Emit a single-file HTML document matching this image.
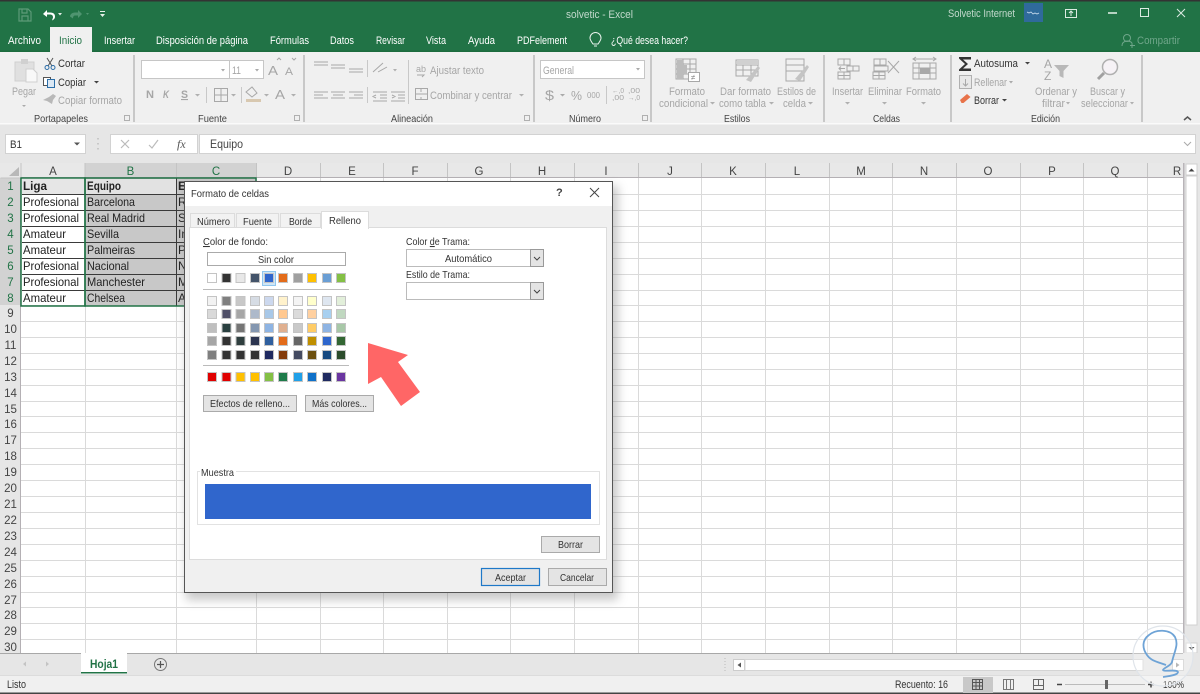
<!DOCTYPE html>
<html lang="es"><head><meta charset="utf-8"><title>solvetic - Excel</title>
<style>
html,body{margin:0;padding:0;background:#fff;width:1200px;height:694px;overflow:hidden}
svg{display:block;filter:blur(.35px)}
text{font-family:"Liberation Sans",sans-serif;font-size:11px;fill:#333}
.u{text-decoration:underline}
.g text{fill:#a6a6a6}
.t text{fill:#fff}
.l text{fill:#444;font-size:10.5px}
.c text{font-size:12px;fill:#222}
.h text{font-size:11.5px;fill:#444;text-anchor:middle}
.hg text{font-size:11.5px;fill:#217346;text-anchor:middle}
.s rect{stroke:#c4c4c4;stroke-width:1}
.i{fill:none;stroke:#a8a8a8;stroke-width:1}
.d{fill:none;stroke:#444;stroke-width:1}
</style></head><body>
<svg width="1200" height="694" viewBox="0 0 1200 694" xmlns="http://www.w3.org/2000/svg">
<defs><filter id="b" x="-10%" y="-10%" width="120%" height="120%"><feGaussianBlur stdDeviation="5"/></filter></defs>
<rect width="1200" height="694" fill="#fff"/>
<!-- title -->
<rect width="1200" height="52" fill="#217346"/>
<rect width="1200" height="1.5" fill="#333"/>
<rect y="50.5" width="1200" height="1.5" fill="#1c6b3e"/>
<rect x="50" y="27" width="42" height="25" fill="#f0f0f0"/>
<g fill="none" stroke="#5d9a78" stroke-width="1.2"><path d="M19 9h9l3 3v9H19zM22 9v4h5V9M22 21v-5h6v5"/></g>
<path d="M43 14l4-4v2.500h3c4 0 5 2 5 4s-1 3-3 4l1-3c0-2-1-3-3-3h-3v2.500z" fill="#fff"/>
<path d="M58 13h4l-2 2.500z" fill="#e0ece5"/>
<path d="M82 14l-4-4v2.500h-3c-3 0-5 2-5 4l3 2c0-2 1-3 2-3h3v2.500z" fill="#4f9470"/>
<path d="M86 13h3l-1.500 2z" fill="#4f9470"/>
<path d="M100 11h5v1h-5zM100 14h5l-2.500 3z" fill="#e8f0ea"/>
<g style="opacity:.72" class="t"><text x="566" y="18" textLength="67" lengthAdjust="spacingAndGlyphs">solvetic  -  Excel</text><text x="948" y="17" textLength="67" lengthAdjust="spacingAndGlyphs">Solvetic Internet</text></g>
<rect x="1024" y="3" width="19" height="19" fill="#2f6a9b"/>
<path d="M1027 12l2 1 2-1 2 2 2-1 2 1 2-1" fill="none" stroke="#cde" stroke-width=".8"/>
<g fill="none" stroke="#dcebe2" stroke-width="1"><rect x="1065.500" y="9.500" width="11" height="8"/><path d="M1071 16v-5M1069 13l2-2 2 2"/><path d="M1108 13h9" stroke-width="1.600"/><rect x="1140.500" y="8.500" width="8" height="8"/><path d="M1177 9l8 8M1185 9l-8 8"/></g>
<g class="t"><text x="8" y="44" textLength="33" lengthAdjust="spacingAndGlyphs">Archivo</text><text x="59" y="44" textLength="23" lengthAdjust="spacingAndGlyphs" style="fill:#217346">Inicio</text><text x="104" y="44" textLength="31" lengthAdjust="spacingAndGlyphs">Insertar</text><text x="156" y="44" textLength="92" lengthAdjust="spacingAndGlyphs">Disposición de página</text><text x="270" y="44" textLength="39" lengthAdjust="spacingAndGlyphs">Fórmulas</text><text x="330" y="44" textLength="24" lengthAdjust="spacingAndGlyphs">Datos</text><text x="376" y="44" textLength="29" lengthAdjust="spacingAndGlyphs">Revisar</text><text x="426" y="44" textLength="20" lengthAdjust="spacingAndGlyphs">Vista</text><text x="468" y="44" textLength="27" lengthAdjust="spacingAndGlyphs">Ayuda</text><text x="517" y="44" textLength="50" lengthAdjust="spacingAndGlyphs">PDFelement</text><text x="611" y="44" textLength="77" lengthAdjust="spacingAndGlyphs">¿Qué desea hacer?</text></g>
<path d="M593 44c-2-3-3-4-3-6a5.500 5.500 0 0 1 11 0c0 2-1 3-3 6zM594 46h3" fill="none" stroke="#e8f2ec" stroke-width="1"/>
<g fill="none" stroke="#6fa68a" stroke-width="1"><circle cx="1127" cy="38" r="3.500"/><path d="M1122 46c0-6 8-6 10-3M1132 43v5M1130 45.500h5"/></g>
<text x="1137" y="44" textLength="43" lengthAdjust="spacingAndGlyphs" style="fill:#6fa68a">Compartir</text>
<!-- ribbon -->
<rect y="52" width="1200" height="71" fill="#f0f0f0"/>
<rect y="123" width="1200" height="1.500" fill="#fafafa"/>
<rect y="124.500" width="1200" height="38.500" fill="#e6e6e6"/>
<g fill="#c8c8c8"><rect x="133" y="55" width="2" height="67"/><rect x="303" y="55" width="2" height="67"/><rect x="533" y="55" width="2" height="67"/><rect x="650" y="55" width="2" height="67"/><rect x="823" y="55" width="2" height="67"/><rect x="950" y="55" width="2" height="67"/><rect x="1141" y="55" width="2" height="67"/></g>
<g class="l"><text x="34" y="122" textLength="54" lengthAdjust="spacingAndGlyphs">Portapapeles</text><text x="198" y="122" textLength="29" lengthAdjust="spacingAndGlyphs">Fuente</text><text x="391" y="122" textLength="42" lengthAdjust="spacingAndGlyphs">Alineación</text><text x="569" y="122" textLength="32" lengthAdjust="spacingAndGlyphs">Número</text><text x="724" y="122" textLength="26" lengthAdjust="spacingAndGlyphs">Estilos</text><text x="873" y="122" textLength="27" lengthAdjust="spacingAndGlyphs">Celdas</text><text x="1031" y="122" textLength="29" lengthAdjust="spacingAndGlyphs">Edición</text></g>
<g fill="none" stroke="#b0b0b0" stroke-width="1"><path d="M124.500 115.500h5v5h-5zM294.500 115.500h5v5h-5zM524.500 115.500h5v5h-5zM642.500 115.500h5v5h-5z"/></g>
<!-- portapapeles -->
<path d="M15 62h19v19H15z" fill="#e0e0e0" stroke="#cfcfcf"/><rect x="21" y="59" width="7" height="5" fill="#d0d0d0"/><path d="M26 69h7l4 4v9H26z" fill="#f8f8f8" stroke="#cfcfcf"/>
<g class="g"><text x="12" y="95" textLength="24" lengthAdjust="spacingAndGlyphs">Pegar</text><text x="58" y="104" textLength="64" lengthAdjust="spacingAndGlyphs">Copiar formato</text></g>
<path d="M22 105h4l-2 2z" fill="#aaa"/>
<g fill="none" stroke="#555" stroke-width="1"><path d="M47 58l5 8M53 58l-5 8"/></g><g fill="none" stroke="#2b6ea8"><circle cx="47" cy="67.500" r="2"/><circle cx="53" cy="67.500" r="2"/></g>
<text x="58" y="67" textLength="27" lengthAdjust="spacingAndGlyphs">Cortar</text><text x="58" y="86" textLength="28" lengthAdjust="spacingAndGlyphs">Copiar</text>
<rect x="43.500" y="77.500" width="7" height="8" fill="#fff" stroke="#555"/><rect x="47.500" y="79.500" width="7" height="8" fill="#dbe8f4" stroke="#2b6ea8"/>
<path d="M94 81h5l-2.500 2.500z" fill="#444"/>
<path d="M43 100l6-3 4-3 3 2-3 4-1 4-5-3z" fill="#b8b8b8"/>
<!-- fuente -->
<rect x="141.500" y="60.500" width="122" height="18" fill="#fff" stroke="#c6c6c6"/><path d="M229.500 60v18" stroke="#c6c6c6"/>
<path d="M221 69h4l-2 2.500zM255 69h4l-2 2.500z" fill="#aaa"/>
<g class="g"><text x="232" y="74" textLength="9" lengthAdjust="spacingAndGlyphs">11</text><text x="268" y="75" textLength="10" lengthAdjust="spacingAndGlyphs" style="font-size:13px">A</text><text x="285" y="75" textLength="8" lengthAdjust="spacingAndGlyphs" style="font-size:11px">A</text>
<text x="146" y="98" textLength="8" lengthAdjust="spacingAndGlyphs" style="font-weight:bold">N</text><text x="163" y="98" textLength="6" lengthAdjust="spacingAndGlyphs" style="font-weight:bold;font-style:italic">K</text><text x="181" y="98" textLength="7" lengthAdjust="spacingAndGlyphs" style="font-weight:bold" class="u">S</text><text x="275" y="99" textLength="10" lengthAdjust="spacingAndGlyphs" style="font-size:13px">A</text></g>
<path d="M277 60l2-2 2 2M292 58l2 2 2-2" class="i"/>
<path d="M195 94h5l-2.500 2.500zM231 94h5l-2.500 2.500zM264 94h5l-2.500 2.500zM291 94h5l-2.500 2.500z" fill="#b0b0b0"/>
<path d="M206.500 87v16M241.500 87v16" stroke="#c8c8c8"/>
<path d="M214.500 88.500h13v13h-13zM221 88v13M214 95h13" class="i"/>
<path d="M246 92l6-5 5 6-5 4z" class="i"/><rect x="246" y="99" width="15" height="3" fill="#d8c8b0"/>
<!-- alineacion -->
<g class="i"><path d="M314 62h14M314 65h14M331 65h14M331 68h14M349 69h14M349 72h14"/><path d="M314 92h14M314 95h9M314 98h14M331 92h14M333 95h10M331 98h14M349 92h14M354 95h9M349 98h14"/><path d="M373 72l10-9M378 72l9-5"/><path d="M373 92h14M380 95h7M380 98h7M373 101h14M376 95l-3 1.500 3 1.500M391 92h14M398 95h7M398 98h7M391 101h14M392 95l3 1.500-3 1.500"/></g>
<path d="M367.500 60v17M367.500 87v16M408.500 60v44" stroke="#c8c8c8"/>
<path d="M393 69h4l-2 2.500z" fill="#b0b0b0"/>
<text x="416" y="72" style="fill:#a8a8a8;font-size:9px">ab</text><path d="M417 75h7l-2 2" class="i"/>
<rect x="415.500" y="88.500" width="12" height="11" class="i"/><path d="M415 94h13M421 89v3M421 97v3" class="i"/>
<g class="g"><text x="430" y="74" textLength="54" lengthAdjust="spacingAndGlyphs">Ajustar texto</text><text x="430" y="99" textLength="82" lengthAdjust="spacingAndGlyphs">Combinar y centrar</text></g>
<path d="M519 94h5l-2.500 2.500z" fill="#b0b0b0"/>
<!-- numero -->
<rect x="540.500" y="60.500" width="104" height="18" fill="#fff" stroke="#c6c6c6"/>
<g class="g"><text x="543" y="74" textLength="31" lengthAdjust="spacingAndGlyphs">General</text><text x="545" y="100" textLength="9" lengthAdjust="spacingAndGlyphs" style="font-size:14px">$</text><text x="571" y="100" textLength="11" lengthAdjust="spacingAndGlyphs" style="font-size:13px">%</text><text x="587" y="98" textLength="13" lengthAdjust="spacingAndGlyphs" style="font-size:8px">000</text><text x="612" y="93" textLength="12" lengthAdjust="spacingAndGlyphs" style="font-size:7px">←,0</text><text x="612" y="100" textLength="12" lengthAdjust="spacingAndGlyphs" style="font-size:7px">,00</text><text x="628" y="93" textLength="12" lengthAdjust="spacingAndGlyphs" style="font-size:7px">,00</text><text x="628" y="100" textLength="12" lengthAdjust="spacingAndGlyphs" style="font-size:7px">→,0</text></g>
<path d="M636 68h4l-2 2.500zM560 94h5l-2.500 2.500z" fill="#aaa"/>
<path d="M606.500 86v18" stroke="#c8c8c8"/>
<!-- estilos -->
<g class="i"><path d="M676 59h20v20h-20zM676 64h20M676 69h20M676 74h20M683 59v20M690 59v20"/></g><path d="M677 60h6v19h-6zM683 65h4v9h-4z" fill="#bcbcbc"/><rect x="688.500" y="72.500" width="11" height="9" fill="#fff" stroke="#a8a8a8"/><text x="691" y="80" style="fill:#888;font-size:8px">≠</text>
<g class="i"><path d="M736 60h22v16h-22zM736 65h22M736 70h22M743 60v16M751 60v16"/></g><path d="M737 60h21v5h-21z" fill="#d0d0d0"/><path d="M746 80l12-14 2 2-9 14z" fill="#c4c4c4"/>
<g class="i"><path d="M786 59h18v22h-18zM786 65h18M786 71h18"/></g><path d="M795 79l12-14 2 2-9 14z" fill="#c4c4c4"/>
<g class="g"><text x="669" y="95" textLength="36" lengthAdjust="spacingAndGlyphs">Formato</text><text x="659" y="107" textLength="49" lengthAdjust="spacingAndGlyphs">condicional</text><text x="720" y="95" textLength="51" lengthAdjust="spacingAndGlyphs">Dar formato</text><text x="719" y="107" textLength="47" lengthAdjust="spacingAndGlyphs">como tabla</text><text x="777" y="95" textLength="39" lengthAdjust="spacingAndGlyphs">Estilos de</text><text x="783" y="107" textLength="23" lengthAdjust="spacingAndGlyphs">celda</text></g>
<path d="M710 102h5l-2.500 2.500zM769 102h5l-2.500 2.500zM808 102h5l-2.500 2.500z" fill="#b0b0b0"/>
<!-- celdas -->
<g class="i"><path d="M838 59h12v6h-12zM844 59v6M847 66h12v5h-12zM853 66v5M838 72h12v7h-12zM844 72v7M838 75.500h12M845 68.500h-6M841 66.500l-2 2 2 2"/>
<path d="M874 59h12v6h-12zM880 59v6M873 72h12v7h-12zM879 72v7M873 75.500h12M874 66h14v5h-14zM888 61l11 12M899 61l-11 12"/>
<path d="M913 63h23v16h-23zM919 63v16M930 63v16M913 68h23M913 73h23M913 59h23M916 57l-3 2 3 2M933 57l3 2-3 2"/></g><rect x="920" y="68" width="10" height="6" fill="#a8a8a8"/>
<g class="g"><text x="832" y="95" textLength="31" lengthAdjust="spacingAndGlyphs">Insertar</text><text x="868" y="95" textLength="34" lengthAdjust="spacingAndGlyphs">Eliminar</text><text x="906" y="95" textLength="35" lengthAdjust="spacingAndGlyphs">Formato</text></g>
<path d="M845 102h5l-2.500 2.500zM882 102h5l-2.500 2.500zM921 102h5l-2.500 2.500z" fill="#b0b0b0"/>
<!-- edicion -->
<path d="M959 57h12v2.500h-8l5 4.500-5 4.500h8v2.500h-12v-1.500l6-5.500-6-5.500z" fill="#333"/>
<text x="974" y="67" textLength="44" lengthAdjust="spacingAndGlyphs">Autosuma</text><path d="M1025 62h5l-2.500 2.500z" fill="#444"/>
<rect x="959.500" y="75.500" width="12" height="13" fill="#e8e8e8" stroke="#b0b0b0"/><path d="M965.500 79v7M963 83.500l2.500 2.500 2.500-2.500" class="i"/>
<g class="g"><text x="974" y="86" textLength="33" lengthAdjust="spacingAndGlyphs">Rellenar</text></g><path d="M1009 81h4l-2 2.500z" fill="#aaa"/>
<path d="M960 100l7-6 3.500 3-7 6h-2z" fill="#e8734a"/>
<text x="974" y="104" textLength="25" lengthAdjust="spacingAndGlyphs">Borrar</text><path d="M1002 99h5l-2.500 2.500z" fill="#444"/>
<g class="g"><text x="1044" y="68" style="font-size:12px">A</text><text x="1044" y="80" style="font-size:12px">Z</text><text x="1035" y="95" textLength="42" lengthAdjust="spacingAndGlyphs">Ordenar y</text><text x="1042" y="107" textLength="23" lengthAdjust="spacingAndGlyphs">filtrar</text><text x="1090" y="95" textLength="35" lengthAdjust="spacingAndGlyphs">Buscar y</text><text x="1081" y="107" textLength="47" lengthAdjust="spacingAndGlyphs">seleccionar</text></g>
<path d="M1054 65h15l-5.500 6v7l-4-2v-5z" fill="#b8b8b8"/>
<path d="M1066 102h4l-2 2.500zM1130 102h4l-2 2.500z" fill="#b0b0b0"/>
<circle cx="1110" cy="67" r="7.500" fill="#f6f2f6" stroke="#b0b0b0" stroke-width="1.500"/><path d="M1104 73l-6 6" stroke="#a0a0a0" stroke-width="3"/>
<path d="M1184 120l3.500-3 3.500 3" fill="none" stroke="#555" stroke-width="1.500"/>
<!-- formula bar -->
<rect x="5.500" y="134.500" width="80" height="19" fill="#fff" stroke="#d2d2d2"/><text x="10" y="148" textLength="12" lengthAdjust="spacingAndGlyphs">B1</text><path d="M74 142.500h6l-3 3z" fill="#555"/>
<path d="M98 138v1.500M98 143v1.500M98 148v1.500" stroke="#aaa"/>
<rect x="110.500" y="134.500" width="87" height="19" fill="#fff" stroke="#d2d2d2"/><path d="M121 140l8 8M129 140l-8 8M149 145l3 3 6-8" fill="none" stroke="#bbb" stroke-width="1.200"/>
<text x="177" y="148" style="font-family:'Liberation Serif',serif;font-style:italic;font-size:12px;fill:#555">fx</text>
<rect x="199.500" y="134.500" width="996" height="19" fill="#fff" stroke="#d2d2d2"/><text x="210" y="148" textLength="33" lengthAdjust="spacingAndGlyphs" style="font-size:11.5px;fill:#444">Equipo</text><path d="M1184 142l3.500 3.500 3.500-3.500" fill="none" stroke="#aaa"/>
<!-- headers -->
<rect y="163" width="1183" height="15" fill="#e8e8e8"/><rect y="178" width="21" height="475" fill="#e6e6e6"/>
<rect x="85" y="163" width="171" height="15" fill="#d2d2d2"/><rect y="178" width="21" height="127" fill="#d2d2d2"/>
<path d="M19 167v9h-10z" fill="#b8b8b8"/>
<path d="M.5 178h20M85 163v15M176.500 163v15M256.500 163v15M320.500 163v15M383.500 163v15M447.500 163v15M510.500 163v15M574.500 163v15M638.500 163v15M701.500 163v15M765.500 163v15M829.500 163v15M892.500 163v15M956.500 163v15M1020.500 163v15M1083.500 163v15M1147.500 163v15M21 163v15" stroke="#c4c4c4"/>
<rect x="21" y="177" width="1162" height="1" fill="#b4b0b4"/><rect x="20" y="178" width="1" height="475" fill="#b4b0b4"/>
<g class="h"><text x="53" y="175">A</text><text x="288" y="175">D</text><text x="352" y="175">E</text><text x="415" y="175">F</text><text x="479" y="175">G</text><text x="542" y="175">H</text><text x="606" y="175">I</text><text x="670" y="175">J</text><text x="733" y="175">K</text><text x="797" y="175">L</text><text x="861" y="175">M</text><text x="924" y="175">N</text><text x="988" y="175">O</text><text x="1052" y="175">P</text><text x="1115" y="175">Q</text><text x="1177" y="175">R</text></g>
<g class="hg"><text x="130.500" y="175">B</text><text x="216" y="175">C</text><text x="10.500" y="190">1</text><text x="10.500" y="206">2</text><text x="10.500" y="222">3</text><text x="10.500" y="238">4</text><text x="10.500" y="254">5</text><text x="10.500" y="270">6</text><text x="10.500" y="286">7</text><text x="10.500" y="302">8</text></g>
<g class="h"><text x="10.500" y="317">9</text><text x="10.500" y="333">10</text><text x="10.500" y="349">11</text><text x="10.500" y="365">12</text><text x="10.500" y="381">13</text><text x="10.500" y="397">14</text><text x="10.500" y="413">15</text><text x="10.500" y="428">16</text><text x="10.500" y="444">17</text><text x="10.500" y="460">18</text><text x="10.500" y="476">19</text><text x="10.500" y="492">20</text><text x="10.500" y="508">21</text><text x="10.500" y="524">22</text><text x="10.500" y="540">23</text><text x="10.500" y="556">24</text><text x="10.500" y="572">25</text><text x="10.500" y="588">26</text><text x="10.500" y="604">27</text><text x="10.500" y="619">28</text><text x="10.500" y="635">29</text><text x="10.500" y="651">30</text></g>
<!-- grid -->
<g stroke="#dadada"><path d="M21 321.500h1162M21 337.500h1162M21 353.500h1162M21 369.500h1162M21 385.500h1162M21 401.500h1162M21 416.500h1162M21 432.500h1162M21 448.500h1162M21 464.500h1162M21 480.500h1162M21 496.500h1162M21 512.500h1162M21 528.500h1162M21 544.500h1162M21 560.500h1162M21 576.500h1162M21 592.500h1162M21 607.500h1162M21 623.500h1162M21 639.500h1162"/>
<path d="M256 194.500h927M256 210.500h927M256 226.500h927M256 242.500h927M256 258.500h927M256 274.500h927M256 290.500h927M21 305.500h1162"/>
<path d="M85.500 306v347M176.500 306v347M256.500 178v475M320.500 178v475M383.500 178v475M447.500 178v475M510.500 178v475M574.500 178v475M638.500 178v475M701.500 178v475M765.500 178v475M829.500 178v475M892.500 178v475M956.500 178v475M1020.500 178v475M1083.500 178v475M1147.500 178v475"/></g>
<!-- cells -->
<rect x="22" y="179" width="63" height="15" fill="#e6e6e6"/>
<rect x="85" y="178" width="171" height="128" fill="#c8c8c8"/>
<rect x="86" y="179" width="90" height="15" fill="#e2e2e2"/>
<g stroke="#3a3a3a"><path d="M22 194.500h234M22 210.500h234M22 226.500h234M22 242.500h234M22 258.500h234M22 274.500h234M22 290.500h234M176.500 178v128"/></g>
<rect x="21" y="178" width="64" height="128" fill="none" stroke="#217346" stroke-width="1.500"/>
<rect x="85" y="178" width="171" height="128" fill="none" stroke="#217346" stroke-width="1.500"/>
<g class="c"><text x="23" y="190" textLength="24" lengthAdjust="spacingAndGlyphs" style="font-weight:bold">Liga</text><text x="87" y="190" textLength="34" lengthAdjust="spacingAndGlyphs" style="font-weight:bold">Equipo</text><text x="178" y="190" style="font-weight:bold">E</text>
<text x="23" y="206" textLength="56" lengthAdjust="spacingAndGlyphs">Profesional</text><text x="23" y="222" textLength="56" lengthAdjust="spacingAndGlyphs">Profesional</text><text x="23" y="238" textLength="43" lengthAdjust="spacingAndGlyphs">Amateur</text><text x="23" y="254" textLength="43" lengthAdjust="spacingAndGlyphs">Amateur</text><text x="23" y="270" textLength="56" lengthAdjust="spacingAndGlyphs">Profesional</text><text x="23" y="286" textLength="56" lengthAdjust="spacingAndGlyphs">Profesional</text><text x="23" y="302" textLength="43" lengthAdjust="spacingAndGlyphs">Amateur</text>
<text x="87" y="206" textLength="48" lengthAdjust="spacingAndGlyphs">Barcelona</text><text x="87" y="222" textLength="58" lengthAdjust="spacingAndGlyphs">Real Madrid</text><text x="87" y="238" textLength="32" lengthAdjust="spacingAndGlyphs">Sevilla</text><text x="87" y="254" textLength="48" lengthAdjust="spacingAndGlyphs">Palmeiras</text><text x="87" y="270" textLength="42" lengthAdjust="spacingAndGlyphs">Nacional</text><text x="87" y="286" textLength="58" lengthAdjust="spacingAndGlyphs">Manchester</text><text x="87" y="302" textLength="38" lengthAdjust="spacingAndGlyphs">Chelsea</text>
<text x="178" y="206">R</text><text x="178" y="222">S</text><text x="178" y="238">In</text><text x="178" y="254">P</text><text x="178" y="270">N</text><text x="178" y="286">M</text><text x="178" y="302">A</text></g>
<!-- vertical scrollbar -->
<rect x="1183" y="163" width="17" height="490" fill="#e6e6e6"/><rect x="1183" y="163" width="1.500" height="490" fill="#b8b4b8"/>
<rect x="1186" y="164" width="11" height="11" fill="#fff" stroke="#d0d0d0"/><path d="M1188.500 171.500h6l-3-3z" fill="#444"/>
<rect x="1186" y="176" width="11" height="449" fill="#fff" stroke="#d0d0d0"/>
<rect x="1186" y="643" width="11" height="10" fill="#fff" stroke="#d0d0d0"/><path d="M1188.500 647h6l-3 3z" fill="#444"/>
<!-- bottom -->
<rect y="653" width="1200" height="23" fill="#e6e6e6"/><rect y="653" width="81" height="1" fill="#a8a8a8"/><rect x="127" y="653" width="606" height="1" fill="#a8a8a8"/><rect x="733" y="653" width="450" height="1" fill="#a8a8a8"/>
<path d="M26 661.500l-3 2.500 3 2.500zM46 661.500l3 2.500-3 2.500z" fill="#c4c4c4"/>
<rect x="81" y="653" width="46" height="21" fill="#fff"/><rect x="81" y="672" width="46" height="1.500" fill="#217346"/>
<text x="90" y="668" textLength="28" lengthAdjust="spacingAndGlyphs" style="font-weight:bold;fill:#217346;font-size:11.500px">Hoja1</text>
<circle cx="160.500" cy="664.500" r="6" fill="none" stroke="#777"/><path d="M157 664.500h7M160.500 661v7" stroke="#555" stroke-width="1.200"/>
<path d="M725 658v14" stroke="#bbb" stroke-dasharray="1 2"/>
<rect x="733.500" y="659.500" width="11" height="11" fill="#fff" stroke="#ccc"/><path d="M741 662.500v5l-3.500-2.500z" fill="#555"/>
<rect x="745" y="659.500" width="398" height="11" fill="#fff" stroke="#d4d4d4"/>
<rect x="1172.500" y="659.500" width="11" height="11" fill="#fff" stroke="#ccc"/><path d="M1176 662.500v5l3.500-2.500z" fill="#999"/>
<rect y="676" width="1200" height="18" fill="#f0f0f0"/><rect y="675" width="1200" height="1" fill="#dcdcdc"/><rect y="692.500" width="1200" height="1.500" fill="#444"/>
<text x="7" y="688" textLength="19" lengthAdjust="spacingAndGlyphs">Listo</text><text x="895" y="688" textLength="53" lengthAdjust="spacingAndGlyphs">Recuento: 16</text>
<rect x="963" y="677" width="30" height="16" fill="#c8c8c8"/>
<path d="M972.500 679.500h10v10h-10zM972.500 682.500h10M972.500 686h10M976 679.500v10M979.500 679.500v10" fill="none" stroke="#555"/>
<path d="M1003.500 679.500h10v10h-10zM1006.500 680v9M1010.500 680v9" fill="none" stroke="#777"/>
<path d="M1033.500 679.500h10v10h-10zM1033 685.500h11M1038.500 680v5" fill="none" stroke="#666"/>
<path d="M1057 684.500h5" stroke="#444" stroke-width="1.500"/><path d="M1065 684.500h80" stroke="#bbb"/><rect x="1105" y="680" width="3" height="9" fill="#666"/>
<path d="M1148 684.500h6M1151 681.500v6" stroke="#444" stroke-width="1.500"/>
<text x="1163" y="688" textLength="21" lengthAdjust="spacingAndGlyphs" style="font-size:10.500px">100%</text>
<!-- dialog shadow & dialog -->
<rect x="186" y="186" width="432" height="414" fill="#777" opacity=".4" filter="url(#b)"/>
<rect x="184.500" y="181.500" width="428" height="411" fill="#f0f0f0" stroke="#555"/>
<rect x="185" y="182" width="427" height="24" fill="#fff"/>
<text x="191" y="197" textLength="78" lengthAdjust="spacingAndGlyphs" style="font-size:10.500px">Formato de celdas</text>
<text x="556" y="196" style="font-weight:bold;font-size:11px;fill:#444">?</text>
<path d="M590 188l9 9M599 188l-9 9" stroke="#444" fill="none"/>
<!-- dialog tabs -->
<rect x="190.500" y="213.500" width="44" height="15" fill="#f2f2f2" stroke="#dcdcdc"/><rect x="236.500" y="213.500" width="42" height="15" fill="#f2f2f2" stroke="#dcdcdc"/><rect x="280.500" y="213.500" width="40" height="15" fill="#f2f2f2" stroke="#dcdcdc"/>
<rect x="189.500" y="227.500" width="417" height="332" fill="#fff" stroke="#dcdcdc"/>
<rect x="321.500" y="211.500" width="47" height="17" fill="#fff" stroke="#dcdcdc"/><rect x="322" y="226" width="46" height="3" fill="#fff"/>
<text x="197" y="225" textLength="33" lengthAdjust="spacingAndGlyphs" style="font-size:10.500px">Número</text><text x="243" y="225" textLength="29" lengthAdjust="spacingAndGlyphs" style="font-size:10.500px">Fuente</text><text x="289" y="225" textLength="23" lengthAdjust="spacingAndGlyphs" style="font-size:10.500px">Borde</text><text x="329" y="224" textLength="32" lengthAdjust="spacingAndGlyphs" style="font-size:10.500px">Relleno</text>
<text x="203" y="245" textLength="65" lengthAdjust="spacingAndGlyphs" style="font-size:10.500px"><tspan class="u">C</tspan>olor de fondo:</text>
<rect x="207.500" y="252.500" width="138" height="13" fill="#fff" stroke="#aaa"/><text x="258" y="263" textLength="36" lengthAdjust="spacingAndGlyphs" style="font-size:10.500px">Sin color</text>
<rect x="262.500" y="271.500" width="13" height="14" fill="#cfe6f7" stroke="#90c6ee"/>
<g class="s">
<rect x="207.500" y="273.500" width="9" height="9" fill="#fff"/><rect x="222" y="273.500" width="9" height="9" fill="#333"/><rect x="236" y="273.500" width="9" height="9" fill="#e8e8e8"/><rect x="250.500" y="273.500" width="9" height="9" fill="#44546a"/><rect x="264.500" y="273.500" width="9" height="9" fill="#3066cc"/><rect x="278.500" y="273.500" width="9" height="9" fill="#e36c1a"/><rect x="293.500" y="273.500" width="9" height="9" fill="#a0a0a0"/><rect x="307.500" y="273.500" width="9" height="9" fill="#ffc000"/><rect x="322.500" y="273.500" width="9" height="9" fill="#6a9ed4"/><rect x="336.500" y="273.500" width="9" height="9" fill="#84c045"/>
<rect x="207.500" y="296.500" width="9" height="9" fill="#f2f2f2"/><rect x="222" y="296.500" width="9" height="9" fill="#7f7f7f"/><rect x="236" y="296.500" width="9" height="9" fill="#c8c8c8"/><rect x="250.500" y="296.500" width="9" height="9" fill="#d6dce4"/><rect x="264.500" y="296.500" width="9" height="9" fill="#ccd8ee"/><rect x="278.500" y="296.500" width="9" height="9" fill="#fff2cc"/><rect x="293.500" y="296.500" width="9" height="9" fill="#f4f4f4"/><rect x="307.500" y="296.500" width="9" height="9" fill="#ffffcc"/><rect x="322.500" y="296.500" width="9" height="9" fill="#dee6f0"/><rect x="336.500" y="296.500" width="9" height="9" fill="#e2efda"/>
<rect x="207.500" y="309.500" width="9" height="9" fill="#d9d9d9"/><rect x="222" y="309.500" width="9" height="9" fill="#505068"/><rect x="236" y="309.500" width="9" height="9" fill="#a6a6a6"/><rect x="250.500" y="309.500" width="9" height="9" fill="#adb9ca"/><rect x="264.500" y="309.500" width="9" height="9" fill="#a8c8e8"/><rect x="278.500" y="309.500" width="9" height="9" fill="#ffc890"/><rect x="293.500" y="309.500" width="9" height="9" fill="#dbdbdb"/><rect x="307.500" y="309.500" width="9" height="9" fill="#ffd0a0"/><rect x="322.500" y="309.500" width="9" height="9" fill="#a8d0f0"/><rect x="336.500" y="309.500" width="9" height="9" fill="#c0d8c0"/>
<rect x="207.500" y="323.500" width="9" height="9" fill="#bfbfbf"/><rect x="222" y="323.500" width="9" height="9" fill="#2a4040"/><rect x="236" y="323.500" width="9" height="9" fill="#757575"/><rect x="250.500" y="323.500" width="9" height="9" fill="#8497b0"/><rect x="264.500" y="323.500" width="9" height="9" fill="#8eb4e3"/><rect x="278.500" y="323.500" width="9" height="9" fill="#e0b090"/><rect x="293.500" y="323.500" width="9" height="9" fill="#c9c9c9"/><rect x="307.500" y="323.500" width="9" height="9" fill="#ffcc66"/><rect x="322.500" y="323.500" width="9" height="9" fill="#8eb4e3"/><rect x="336.500" y="323.500" width="9" height="9" fill="#a8c8a8"/>
<rect x="207.500" y="336.500" width="9" height="9" fill="#a6a6a6"/><rect x="222" y="336.500" width="9" height="9" fill="#333"/><rect x="236" y="336.500" width="9" height="9" fill="#2f3f3f"/><rect x="250.500" y="336.500" width="9" height="9" fill="#2c3550"/><rect x="264.500" y="336.500" width="9" height="9" fill="#2f5f9e"/><rect x="278.500" y="336.500" width="9" height="9" fill="#e36c1a"/><rect x="293.500" y="336.500" width="9" height="9" fill="#666"/><rect x="307.500" y="336.500" width="9" height="9" fill="#bf8f00"/><rect x="322.500" y="336.500" width="9" height="9" fill="#2e66cc"/><rect x="336.500" y="336.500" width="9" height="9" fill="#336633"/>
<rect x="207.500" y="350.500" width="9" height="9" fill="#7f7f7f"/><rect x="222" y="350.500" width="9" height="9" fill="#333"/><rect x="236" y="350.500" width="9" height="9" fill="#333"/><rect x="250.500" y="350.500" width="9" height="9" fill="#333"/><rect x="264.500" y="350.500" width="9" height="9" fill="#1f2a60"/><rect x="278.500" y="350.500" width="9" height="9" fill="#843c0c"/><rect x="293.500" y="350.500" width="9" height="9" fill="#444a60"/><rect x="307.500" y="350.500" width="9" height="9" fill="#6b4f10"/><rect x="322.500" y="350.500" width="9" height="9" fill="#174a80"/><rect x="336.500" y="350.500" width="9" height="9" fill="#2c4c2c"/>
<rect x="207.500" y="372.500" width="9" height="9" fill="#e00000"/><rect x="222" y="372.500" width="9" height="9" fill="#e00000"/><rect x="236" y="372.500" width="9" height="9" fill="#ffc000"/><rect x="250.500" y="372.500" width="9" height="9" fill="#ffc000"/><rect x="264.500" y="372.500" width="9" height="9" fill="#84c045"/><rect x="278.500" y="372.500" width="9" height="9" fill="#1e7b4a"/><rect x="293.500" y="372.500" width="9" height="9" fill="#20a0e8"/><rect x="307.500" y="372.500" width="9" height="9" fill="#0f70c8"/><rect x="322.500" y="372.500" width="9" height="9" fill="#1f2a60"/><rect x="336.500" y="372.500" width="9" height="9" fill="#6a35a0"/>
</g>
<path d="M203 289.500h146M203 365.500h146" stroke="#bbb"/>
<rect x="203.500" y="395.500" width="93" height="16" fill="#e4e4e4" stroke="#aaa"/><text x="210" y="407" textLength="80" lengthAdjust="spacingAndGlyphs" style="font-size:10.500px">Efectos de relleno...</text>
<rect x="305.500" y="395.500" width="68" height="16" fill="#e4e4e4" stroke="#aaa"/><text x="312" y="407" textLength="55" lengthAdjust="spacingAndGlyphs" style="font-size:10.500px">Más colores...</text>
<text x="406" y="245" textLength="64" lengthAdjust="spacingAndGlyphs" style="font-size:10.500px">Color <tspan class="u">d</tspan>e Trama:</text>
<rect x="406.500" y="249.500" width="137" height="17" fill="#fff" stroke="#bbb"/><rect x="530.500" y="249.500" width="13" height="17" fill="#e4e4e4" stroke="#999"/><path d="M534 257l3 3 3-3" fill="none" stroke="#444"/>
<text x="445" y="262" textLength="47" lengthAdjust="spacingAndGlyphs" style="font-size:10.500px">Automático</text>
<text x="406" y="278" textLength="64" lengthAdjust="spacingAndGlyphs" style="font-size:10.500px">Estilo de Trama:</text>
<rect x="406.500" y="282.500" width="137" height="17" fill="#fff" stroke="#bbb"/><rect x="530.500" y="282.500" width="13" height="17" fill="#e4e4e4" stroke="#999"/><path d="M534 290l3 3 3-3" fill="none" stroke="#444"/>
<!-- arrow -->
<path d="M368 343L408 355L398 362L420 392L401 406L381 377L368 384Z" fill="#ff6666"/>
<!-- muestra -->
<rect x="197.500" y="471.500" width="402" height="53" fill="#fff" stroke="#e2e2e2"/><rect x="200" y="468" width="36" height="7" fill="#fff"/>
<text x="201" y="476" textLength="33" lengthAdjust="spacingAndGlyphs" style="font-size:10.500px">Muestra</text>
<rect x="205" y="484" width="386" height="35" fill="#3066cc"/>
<rect x="541.500" y="536.500" width="58" height="16" fill="#e4e4e4" stroke="#aaa"/><text x="558" y="548" textLength="25" lengthAdjust="spacingAndGlyphs" style="font-size:10.500px">Borrar</text>
<rect x="481.500" y="568.500" width="58" height="17" fill="#e4e4e4" stroke="#1e78c8" stroke-width="1.200"/><text x="495" y="581" textLength="31" lengthAdjust="spacingAndGlyphs" style="font-size:10.500px">Aceptar</text>
<rect x="548.500" y="568.500" width="58" height="17" fill="#e4e4e4" stroke="#aaa"/><text x="560" y="581" textLength="34" lengthAdjust="spacingAndGlyphs" style="font-size:10.500px">Cancelar</text>
<!-- watermark -->
<circle cx="1163" cy="656" r="30" fill="#fff" fill-opacity=".3" stroke="#dfe4ea" stroke-width="1.200"/>
<path d="M1166 665C1158 662 1151 661 1147 655C1142 648 1142 640 1149 635C1156 629 1170 629 1175 637C1179 645 1174 652 1172 662C1171 666 1163 668 1163 670C1164 672 1177 669 1178 672C1178 675 1170 676 1163 677" fill="none" stroke="#6ea3d6" stroke-width="1.800"/>
</svg>
</body></html>
